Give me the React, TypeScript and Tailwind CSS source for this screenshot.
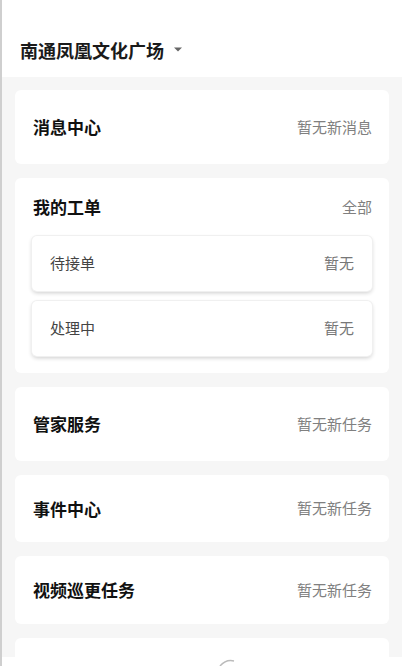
import React from "react";

const font = { fontFamily: '"Noto Sans CJK SC", "Noto Sans", sans-serif' };

function SimpleCard({ title, right, h }: { title: string; right: string; h: string }) {
  return (
    <div className={`flex items-center justify-between rounded-[6px] bg-white pl-[18px] pr-[17px] ${h}`}>
      <span className="text-[17px] font-bold text-[#111]">{title}</span>
      <span className="text-[15px] text-[#808080]">{right}</span>
    </div>
  );
}

function SubCard({ title }: { title: string }) {
  return (
    <div className="flex h-[55px] items-center justify-between rounded-[5px] bg-white px-[18px] shadow-[0_2px_4px_rgba(0,0,0,0.2)] ring-1 ring-[#f0f0f0]">
      <span className="text-[15px] text-[#444]">{title}</span>
      <span className="text-[15px] text-[#777]">暂无</span>
    </div>
  );
}

export default function App() {
  return (
    <div style={font} className="relative h-[666px] w-[402px] overflow-hidden border-l-2 border-[#cfcfcf] bg-[#f6f6f6]">
      <div className="flex h-[77px] items-end bg-white pb-[14px] pl-[18px]">
        <span className="text-[18px] font-bold leading-[26px] text-[#1a1a1a]">南通凤凰文化广场</span>
        <svg width="10" height="6" viewBox="0 0 10 6" className="mb-[10px] ml-[9px]">
          <path d="M1 0.5 L9 0.5 L5 4.5 Z" fill="#666" />
        </svg>
      </div>
      <div className="flex flex-col gap-[14px] px-[13px] pt-[13px]">
        <SimpleCard title="消息中心" right="暂无新消息" h="h-[74px]" />
        <div className="rounded-[6px] bg-white px-[17px] pb-[17px]">
          <div className="flex h-[58px] items-center justify-between pl-px">
            <span className="text-[17px] font-bold text-[#111]">我的工单</span>
            <span className="text-[15px] text-[#808080]">全部</span>
          </div>
          <div className="flex flex-col gap-[10px]">
            <SubCard title="待接单" />
            <SubCard title="处理中" />
          </div>
        </div>
        <SimpleCard title="管家服务" right="暂无新任务" h="h-[74px]" />
        <SimpleCard title="事件中心" right="暂无新任务" h="h-[67px]" />
        <SimpleCard title="视频巡更任务" right="暂无新任务" h="h-[68px]" />
        <SimpleCard title="" right="" h="h-[68px]" />
      </div>
      <div className="absolute bottom-0 left-0 right-0 h-[9px] bg-white">
        <svg width="40" height="9" viewBox="0 0 40 9" className="absolute left-[210px] top-0">
          <path d="M8 9 Q14 2 22 4" stroke="#bbb" strokeWidth="1.5" fill="none" />
        </svg>
      </div>
    </div>
  );
}
